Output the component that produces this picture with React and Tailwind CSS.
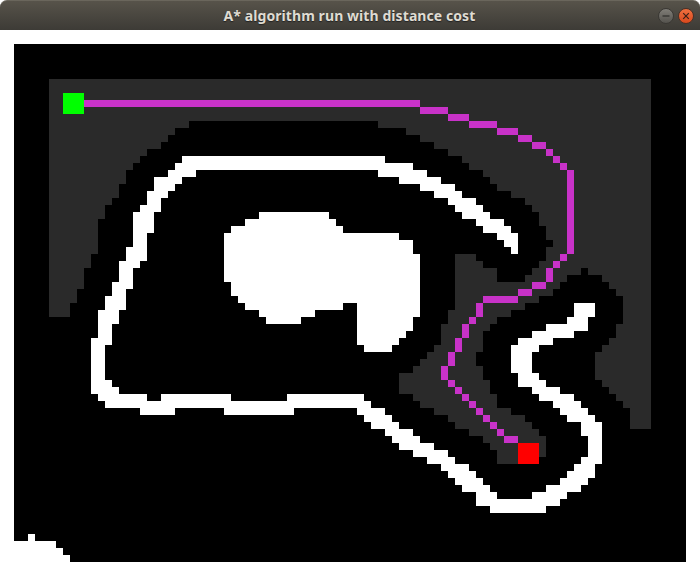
// App.jsx
// A* run window: a titlebar and the 96x74 cell occupancy grid drawn as svg.

// Each entry is [row, [startCol, endCol], ...], end exclusive.
const VISITED = [
  [5, [5, 91]], [6, [5, 91]], [7, [5, 91]], [8, [5, 91]], [9, [5, 91]], [10, [5, 91]],
  [11, [5, 25], [52, 91]], [12, [5, 23], [56, 91]], [13, [5, 22], [58, 91]], [14, [5, 21], [60, 91]],
  [15, [5, 19], [62, 91]], [16, [5, 18], [64, 91]], [17, [5, 17], [65, 91]], [18, [5, 16], [67, 91]],
  [19, [5, 16], [68, 91]], [20, [5, 15], [69, 91]], [21, [5, 15], [71, 91]], [22, [5, 14], [73, 91]],
  [23, [5, 13], [74, 91]], [24, [5, 13], [75, 91]], [25, [5, 12], [75, 91]], [26, [5, 12], [76, 91]],
  [27, [5, 12], [76, 91]], [28, [5, 12], [77, 91]], [29, [5, 12], [76, 91]],
  [30, [5, 11], [63, 66], [76, 91]], [31, [5, 11], [63, 67], [75, 91]],
  [32, [5, 10], [63, 69], [74, 81], [82, 91]], [33, [5, 10], [63, 69], [73, 79], [84, 91]],
  [34, [5, 10], [63, 78], [85, 91]], [35, [5, 9], [63, 77], [86, 91]], [36, [5, 9], [63, 75], [87, 91]],
  [37, [5, 8], [63, 73], [87, 91]], [38, [5, 8], [62, 71], [87, 91]], [39, [62, 69], [87, 91]],
  [40, [61, 68], [86, 91]], [41, [61, 67], [86, 91]], [42, [61, 67], [85, 91]], [43, [60, 67], [84, 91]],
  [44, [59, 66], [83, 91]], [45, [58, 66], [83, 91]], [46, [57, 67], [83, 91]], [47, [55, 67], [83, 91]],
  [48, [55, 68], [84, 91]], [49, [55, 68], [85, 91]], [50, [57, 69], [86, 91]], [51, [58, 69], [87, 91]],
  [52, [60, 71], [88, 91]], [53, [62, 73], [88, 91]], [54, [63, 74], [88, 91]],
  [55, [65, 75]], [56, [67, 76]], [57, [68, 76]], [58, [69, 76]], [59, [69, 72]],
];

const WALLS = [
  [16, [24, 53]], [17, [23, 57]], [18, [22, 26], [52, 59]], [19, [20, 24], [55, 61]], [20, [20, 23], [58, 63]],
  [21, [19, 22], [60, 64]], [22, [19, 21], [62, 66]], [23, [18, 21], [63, 67]],
  [24, [17, 20], [35, 45], [64, 68]], [25, [17, 20], [33, 46], [66, 70]], [26, [17, 20], [31, 47], [67, 71]],
  [27, [17, 19], [30, 55], [69, 72]], [28, [17, 19], [30, 57], [70, 72]], [29, [16, 19], [30, 57], [71, 72]],
  [30, [16, 19], [30, 58]], [31, [15, 18], [30, 58]], [32, [15, 17], [30, 58]], [33, [15, 17], [30, 58]],
  [34, [14, 17], [31, 58]], [35, [14, 16], [31, 58]], [36, [13, 16], [32, 58]],
  [37, [13, 16], [33, 47], [49, 58], [80, 83]], [38, [12, 15], [35, 43], [49, 58], [80, 83]],
  [39, [12, 15], [36, 41], [49, 57], [79, 82]], [40, [12, 14], [49, 57], [76, 82]],
  [41, [12, 14], [49, 56], [74, 80]], [42, [11, 14], [49, 55], [72, 77]], [43, [11, 13], [50, 54], [71, 75]],
  [44, [11, 13], [71, 74]], [45, [11, 13], [71, 74]], [46, [11, 13], [71, 74]], [47, [11, 13], [72, 75]],
  [48, [11, 14], [72, 76]], [49, [11, 15], [74, 78]], [50, [12, 19], [21, 31], [39, 50], [75, 80]],
  [51, [13, 51], [77, 81]], [52, [18, 23], [30, 40], [49, 53], [78, 82]], [53, [50, 54], [79, 83]],
  [54, [51, 55], [81, 84]], [55, [53, 57], [81, 84]], [56, [54, 58], [82, 84]], [57, [55, 60], [82, 84]],
  [58, [57, 62], [82, 84]], [59, [59, 63], [81, 84]], [60, [61, 65], [80, 83]], [61, [62, 66], [79, 83]],
  [62, [63, 67], [78, 82]], [63, [64, 68], [76, 81]], [64, [66, 69], [74, 79]], [65, [66, 78]], [66, [68, 76]],
  [70, [2, 3]], [71, [0, 6]], [72, [0, 7]], [73, [0, 8]],
];

const ROUTE = [
  [8, [10, 58]], [9, [58, 62]], [10, [62, 65]], [11, [65, 69]], [12, [69, 72]], [13, [72, 74]], [14, [74, 76]],
  [15, [76, 77]], [16, [77, 78]], [17, [78, 79]],
  [18, [79, 80]], [19, [79, 80]], [20, [79, 80]], [21, [79, 80]], [22, [79, 80]], [23, [79, 80]],
  [24, [79, 80]], [25, [79, 80]], [26, [79, 80]], [27, [79, 80]], [28, [79, 80]], [29, [79, 80]],
  [30, [78, 79]], [31, [77, 78]], [32, [76, 77]], [33, [76, 77]], [34, [74, 76]], [35, [72, 74]], [36, [67, 72]],
  [37, [66, 67]], [38, [66, 67]], [39, [65, 66]], [40, [64, 65]], [41, [64, 65]], [42, [63, 64]], [43, [63, 64]],
  [44, [62, 63]], [45, [62, 63]], [46, [61, 62]], [47, [61, 62]], [48, [62, 63]], [49, [63, 64]], [50, [64, 65]],
  [51, [65, 66]], [52, [66, 67]], [53, [67, 68]], [54, [68, 69]], [55, [69, 70]], [56, [70, 72]],
];

function toPath(rows) {
  return rows
    .map(([row, ...spans]) =>
      spans.map(([a, b]) => `M${a} ${row}H${b}V${row + 1}H${a}Z`).join("")
    )
    .join("");
}

function GridMap() {
  return (
    <svg viewBox="0 0 96 74" shapeRendering="crispEdges" className="block h-[518px] w-[672px] bg-black">
      <path d={toPath(VISITED)} fill="#2a2a2a" />
      <path d={toPath(WALLS)} fill="#ffffff" />
      <path d={toPath(ROUTE)} fill="#c832c8" />
      <rect x="7" y="7" width="3" height="3" fill="#00ff00" />
      <rect x="72" y="57" width="3" height="3" fill="#ff0000" />
    </svg>
  );
}

function TitleBar() {
  return (
    <div className="grid h-[30px] grid-cols-[1fr_auto_1fr] items-center rounded-t-[7px] border-t border-[#6a665c] bg-gradient-to-b from-[#57534a] to-[#3d3b36]">
      <div />
      <h1 className="pr-px text-[14px] font-bold tracking-[0.08px] text-[#dfdbd2] [font-family:'Noto_Sans',sans-serif] [text-shadow:0_1px_1px_#222]">
        A* algorithm run with distance cost
      </h1>
      <div className="flex items-center justify-end gap-1 pr-[6px]">
        <div className="grid h-4 w-4 place-items-center rounded-full border border-[#3a3834] bg-gradient-to-b from-[#807e78] to-[#55534e]">
          <svg width="10" height="10" viewBox="0 0 10 10">
            <path d="M1.5 5h7" stroke="#2e2d2a" strokeWidth="1.2" />
          </svg>
        </div>
        <div className="grid h-4 w-4 place-items-center rounded-full border border-[#4a3026] bg-gradient-to-b from-[#f0703f] to-[#d8481c]">
          <svg width="10" height="10" viewBox="0 0 10 10">
            <path d="M2.2 2.2l5.6 5.6M7.8 2.2l-5.6 5.6" stroke="#3a2018" strokeWidth="1.2" />
          </svg>
        </div>
      </div>
    </div>
  );
}

export default function App() {
  return (
    <div className="h-[576px] w-[700px] overflow-hidden bg-white">
      <TitleBar />
      <div className="p-[14px]">
        <GridMap />
      </div>
    </div>
  );
}
